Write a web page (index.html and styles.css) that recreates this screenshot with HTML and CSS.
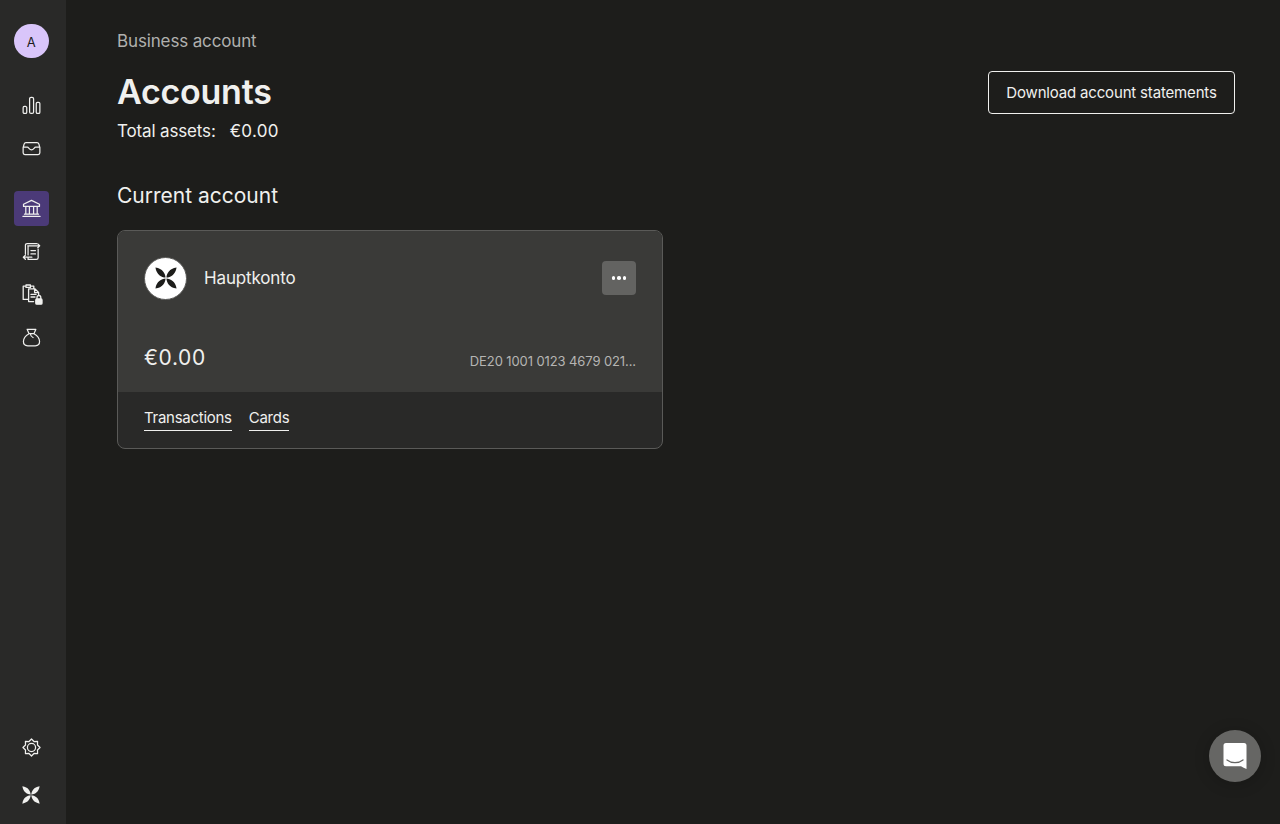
FILE: index.html
```
<!DOCTYPE html>
<html lang="en">
<head>
    <meta charset="UTF-8">
    <title>Accounts</title>
    <link rel="stylesheet" href="styles.css">
</head>
<body>

<!-- Shared brand mark -->
<svg class="sprite">
    <symbol id="logo" viewBox="0 0 20 20">
        <path d="M9.600 9.600C6 9.400 1.300 7 .4.400 7 1.300 9.400 6 9.600 9.600zM10.400 9.600C10.600 6 13 1.300 19.600.4 18.700 7 14 9.400 10.400 9.600zM9.600 10.400C9.400 14 7 18.700.4 19.600 1.300 13 6 10.600 9.600 10.400zM10.400 10.400C14 10.600 18.700 13 19.600 19.600 13 18.700 10.600 14 10.400 10.400z"/>
    </symbol>
</svg>

<nav class="sidebar">
    <div class="avatar">A</div>

    <div class="nav-group">
        <a class="nav-item" href="#" aria-label="Insights">
            <svg class="icon" viewBox="0 0 20 20">
                <rect x="1.200" y="11" width="3.800" height="7.400" rx="1.300"/>
                <rect x="8" y="1.400" width="4.200" height="17" rx="1.600"/>
                <rect x="15" y="6.600" width="3.800" height="11.800" rx="1.300"/>
            </svg>
        </a>
        <a class="nav-item" href="#" aria-label="Inbox">
            <svg class="icon" viewBox="0 0 20 20">
                <path d="M1.200 9v5.600c0 1.100.7 1.800 1.800 1.800h14c1.100 0 1.800-.7 1.800-1.800V9l-1-3.600c-.3-1-.9-1.600-2-1.600H4.200c-1.100 0-1.700.6-2 1.600zM1.200 8.600h4.400c1.600 0 2 2.800 4.400 2.800s2.800-2.800 4.400-2.800h4.400"/>
            </svg>
        </a>
    </div>

    <div class="nav-group">
        <a class="nav-item active" href="#" aria-label="Accounts">
            <svg class="icon" viewBox="0 0 20 20">
                <path d="M10 1.400L1.600 5.600v2.200h16.800V5.600zM1 18.400h18M2.600 16h14.800M4 7.800V16M7.800 7.800V16M12.200 7.800V16M16 7.800V16"/>
            </svg>
        </a>
        <a class="nav-item" href="#" aria-label="Transactions">
            <svg class="icon" viewBox="0 0 20 20">
                <path d="M3.600 12.500V3.400c0-1.100.7-1.800 1.800-1.800h10M6 4h12.600M16.600 2l2 2-2 2M17 7.400v9.200c0 1.100-.7 1.800-1.800 1.800H6.400v-2M6.400 4v9.600M1.400 16h9M3.600 13.800L1.400 16l2.200 2.200M9.400 9h4.800M9.400 12.600h4.800"/>
            </svg>
        </a>
        <a class="nav-item" href="#" aria-label="Locked documents">
            <svg class="icon icon-lock" viewBox="0 0 22 22">
                <path d="M7.400 16.400H2.200V3.200h2.400M5 2h4.400v2.400H5zM9.600 3.200h3.200v2.400M7.600 5.800h6.200l3.800 3.600v2.400M7.600 5.800v12.800h5M13.600 6v3.600h3.800M10 11.400h5M10 14h4"/>
                <path d="M16 16v-1.600a1.900 1.900 0 0 1 3.800 0V16"/>
                <rect class="filled" x="14.800" y="16" width="6.200" height="5.200" rx="1"/>
            </svg>
        </a>
        <a class="nav-item" href="#" aria-label="Savings">
            <svg class="icon" viewBox="0 0 20 20">
                <path d="M7.400 6L5.400 1.400h9.200L12.600 6zM7.400 6C4.600 7.600 1.500 11 1.500 14.300c0 2.900 1.900 4.400 4.500 4.400h8c2.600 0 4.500-1.500 4.500-4.400 0-3.300-3.100-6.700-5.900-8.300M8.800 6c.2 2 1.200 3.400 2.800 4"/>
            </svg>
        </a>
    </div>

    <div class="nav-group nav-bottom">
        <a class="nav-item" href="#" aria-label="Settings">
            <svg class="icon" viewBox="0 0 20 20">
                <circle cx="10" cy="10" r="4.300"/>
                <path d="M10 1l2.600 2.700 3.800-.1-.1 3.800L19 10l-2.700 2.600.1 3.800-3.800-.1L10 19l-2.600-2.700-3.800.1.100-3.800L1 10l2.700-2.600-.1-3.800 3.800.1z"/>
            </svg>
        </a>
        <a class="nav-item" href="#" aria-label="Home">
            <svg class="mark"><use href="#logo"/></svg>
        </a>
    </div>
</nav>

<main class="content">
    <p class="account-type">Business account</p>

    <header class="page-header">
        <div>
            <h1>Accounts</h1>
            <p class="total"><span class="total-label">Total assets:</span><span class="total-value">€0.00</span></p>
        </div>
        <button class="download-button">Download account statements</button>
    </header>

    <h2>Current account</h2>

    <section class="card">
        <div class="card-main">
            <div class="card-row">
                <div class="card-logo">
                    <svg><use href="#logo"/></svg>
                </div>
                <span class="card-name">Hauptkonto</span>
                <button class="more-button" aria-label="More">
                    <span class="dot"></span><span class="dot"></span><span class="dot"></span>
                </button>
            </div>
            <div class="card-row card-figures">
                <span class="balance">€0.00</span>
                <span class="iban">DE20 1001 0123 4679 021...</span>
            </div>
        </div>
        <div class="card-links">
            <a href="#">Transactions</a>
            <a href="#">Cards</a>
        </div>
    </section>
</main>

<button class="chat-button" aria-label="Chat">
    <svg viewBox="0 0 24 28">
        <path class="bubble" d="M3 1h18a2.500 2.500 0 0 1 2.500 2.500V27c-2-.6-3.800-1.500-5.500-2.700H3A2.500 2.500 0 0 1 .5 21.800V3.500A2.500 2.500 0 0 1 3 1z"/>
        <path class="smile" d="M4 18c4.600 3.600 11.400 3.600 16 0"/>
    </svg>
</button>

</body>
</html>
```
FILE: styles.css
```
* {
    box-sizing: border-box;
}
body {
    font-family: Inter, 'Liberation Sans', sans-serif;
    margin: 0;
    height: 824px;
    display: flex;
    overflow: hidden;
    background-color: #1d1d1b;
    color: #f0f0ee;
}
h1, h2, p {
    margin: 0;
}
button {
    font-family: inherit;
    color: inherit;
    padding: 0;
    cursor: pointer;
}
.sprite {
    display: none;
}

/* Sidebar */
.sidebar {
    width: 66px;
    flex-shrink: 0;
    display: flex;
    flex-direction: column;
    padding: 23.500px 0 12px 14px;
    background-color: #292928;
}
.avatar {
    width: 34.500px;
    height: 34.500px;
    border-radius: 50%;
    background-color: #d9c5fa;
    color: #1d1d1b;
    font-size: 13px;
    line-height: 36px;
    text-align: center;
}
.nav-group {
    display: flex;
    flex-direction: column;
    gap: 8.500px;
    margin-top: 25.500px;
}
.avatar + .nav-group {
    margin-top: 30px;
}
.nav-bottom {
    margin-top: auto;
    gap: 13px;
}
.nav-item {
    width: 34.500px;
    height: 34.500px;
    display: flex;
    align-items: center;
    justify-content: center;
    border-radius: 4px;
    color: #f0f0ee;
}
.nav-item.active {
    background-color: #4b3a78;
}
.icon {
    width: 19px;
    height: 19px;
    fill: none;
    stroke: currentColor;
    stroke-width: 1.300;
    stroke-linejoin: round;
    stroke-linecap: round;
}
.icon-lock {
    width: 22px;
    height: 22px;
    margin-left: 2px;
}
.icon .filled {
    fill: currentColor;
}
.mark {
    width: 18px;
    height: 18px;
    fill: currentColor;
}

/* Page */
.content {
    flex: 1;
    padding: 30px 45px 0 51px;
}
.account-type {
    font-size: 17px;
    line-height: 22px;
    letter-spacing: -0.14px;
    color: #b0b0ae;
}
.page-header {
    display: flex;
    justify-content: space-between;
    align-items: flex-start;
    margin-top: 19px;
}
h1 {
    font-size: 34px;
    font-weight: 600;
    line-height: 42px;
    letter-spacing: -0.25px;
}
.total {
    font-size: 17px;
    line-height: 22px;
    margin-top: 7px;
}
.total-label {
    margin-right: 14px;
    letter-spacing: -0.15px;
}
.total-value {
    letter-spacing: 0.3px;
}
.download-button {
    width: 247px;
    height: 43px;
    border: 1px solid #f0f0ee;
    border-radius: 4px;
    background: none;
    font-size: 15px;
    letter-spacing: -0.17px;
}
h2 {
    font-size: 21px;
    font-weight: 400;
    line-height: 28px;
    margin-top: 40px;
}

/* Account card */
.card {
    width: 546px;
    height: 219px;
    margin-top: 20px;
    border: 1px solid #5a5a58;
    border-radius: 8px;
    overflow: hidden;
    background-color: #292928;
}
.card-main {
    height: 161px;
    padding: 26px 26px 0;
    background-color: #3a3a38;
}
.card-row {
    display: flex;
    align-items: center;
    height: 42px;
}
.card-logo {
    width: 43px;
    height: 43px;
    display: flex;
    align-items: center;
    justify-content: center;
    border: 1px solid #5a5a58;
    border-radius: 50%;
    background-color: #fff;
}
.card-logo svg {
    width: 22px;
    height: 22px;
    fill: #1d1d1b;
}
.card-name {
    margin-left: 17px;
    font-size: 17px;
    letter-spacing: -0.14px;
}
.more-button {
    width: 34px;
    height: 34px;
    margin-left: auto;
    display: flex;
    align-items: center;
    justify-content: center;
    gap: 2px;
    border: none;
    border-radius: 4px;
    background-color: #636361;
}
.dot {
    width: 3.500px;
    height: 3.500px;
    border-radius: 50%;
    background-color: #fff;
}
.card-figures {
    justify-content: space-between;
    height: 28px;
    margin-top: 45px;
}
.balance {
    font-size: 21px;
    line-height: 28px;
    letter-spacing: 0.6px;
}
.iban {
    font-size: 13px;
    line-height: 16px;
    margin-top: 6px;
    letter-spacing: -0.1px;
    color: #b5b5b3;
}
.card-links {
    display: flex;
    gap: 17px;
    padding: 16px 26px;
}
.card-links a {
    padding-bottom: 3px;
    border-bottom: 1px solid #f0f0ee;
    color: inherit;
    font-size: 15px;
    line-height: 19px;
    letter-spacing: -0.27px;
    text-decoration: none;
}

/* Chat launcher floats over the page */
.chat-button {
    position: fixed;
    right: 19.500px;
    bottom: 42px;
    width: 52px;
    height: 52px;
    display: flex;
    align-items: center;
    justify-content: center;
    border: none;
    border-radius: 50%;
    background-color: #666664;
    box-shadow: 0 2px 16px rgba(0, 0, 0, 0.2);
}
.chat-button svg {
    width: 24px;
    height: 28px;
}
.bubble {
    fill: #fff;
}
.smile {
    fill: none;
    stroke: #666664;
    stroke-width: 1.300;
    stroke-linecap: round;
}
```
